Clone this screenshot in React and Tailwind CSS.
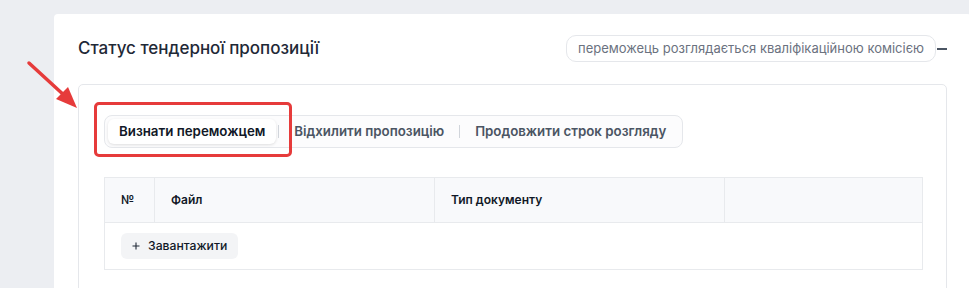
import React from 'react';

const tabs = ['Визнати переможцем', 'Відхилити пропозицію', 'Продовжити строк розгляду'];

const App = () => {
  return (
    <div className="relative min-h-[288px] overflow-hidden bg-[#eceef2] pl-[54px] pt-[14px] font-['Inter',sans-serif]">
      <div className="w-[917px] rounded-[4px] bg-white px-6 pb-10 pt-[21px]">
        {/* Header */}
        <div className="flex h-[27px] items-center justify-between">
          <h2 className="text-[17px] font-medium text-[#1f2937]">Статус тендерної пропозиції</h2>
          <div className="flex items-center">
            <span className="flex h-[27px] items-center rounded-[10px] border border-[#e5e7eb] px-[11px] text-[13px] text-[#6b7280]">
              переможець розглядається кваліфікаційною комісією
            </span>
            <span className="ml-px h-[2px] w-[10px] bg-[#4b5563]" />
          </div>
        </div>

        {/* Inner card */}
        <div className="mt-[22px] rounded-[5px] border border-[#e5e7eb] px-[25px] pb-10 pt-[30px]">
          <div className="inline-flex h-[33px] items-center rounded-[8px] border border-[#e5e7eb] bg-[#fcfcfd] p-[3px]">
            {tabs.map((t, i) => (
              <React.Fragment key={t}>
                {i > 0 && <span className="mx-[2px] h-[13px] w-px bg-[#d1d5db]" />}
                <button
                  className={
                    i === 0
                      ? 'h-[25px] rounded-[6px] bg-white px-[11px] text-[13.3px] font-semibold text-[#111827] shadow-[0_1px_3px_rgba(0,0,0,0.12)]'
                      : 'h-[25px] px-[13px] text-[13.3px] font-semibold text-[#4b5563]'
                  }
                >
                  {t}
                </button>
              </React.Fragment>
            ))}
          </div>

          <table className="mt-[29px] w-[818px] table-fixed border-collapse border border-[#e8eaed] text-left text-[12px] text-[#111827]">
            <colgroup>
              <col className="w-[50px]" />
              <col className="w-[280px]" />
              <col className="w-[290px]" />
              <col className="w-[198px]" />
            </colgroup>
            <thead>
              <tr className="h-[45px] bg-[#f8f9fb]">
                <th className="border-r border-[#e8eaed] px-4 font-semibold">№</th>
                <th className="border-r border-[#e8eaed] px-4 font-semibold">Файл</th>
                <th className="border-r border-[#e8eaed] px-4 font-semibold">Тип документу</th>
                <th className="px-4" />
              </tr>
            </thead>
            <tbody>
              <tr className="border-t border-[#e8eaed]">
                <td colSpan={4} className="px-4 pb-[10px] pt-[10px]">
                  <button className="flex h-[26px] items-center gap-[8px] rounded-[6px] bg-[#f3f4f6] px-[11px] text-[12.2px] font-medium text-[#111827]">
                    <svg width="8" height="8" viewBox="0 0 8 8">
                      <path d="M4 0.5v7M0.5 4h7" stroke="#1f2937" strokeWidth="1.1" />
                    </svg>
                    Завантажити
                  </button>
                </td>
              </tr>
            </tbody>
          </table>
        </div>
      </div>

      {/* Annotation */}
      <div className="pointer-events-none absolute left-[94px] top-[102px] h-[55px] w-[198px] rounded-[5px] border-[3px] border-[#e63b3b]" />
      <svg className="pointer-events-none absolute left-0 top-0" width="100" height="120" viewBox="0 0 100 120">
        <line x1="29" y1="63" x2="66" y2="97" stroke="#e63b3b" strokeWidth="3.5" strokeLinecap="round" />
        <polygon points="77,108 56,99 68,87" fill="#e63b3b" />
      </svg>
    </div>
  );
};

export default App;
